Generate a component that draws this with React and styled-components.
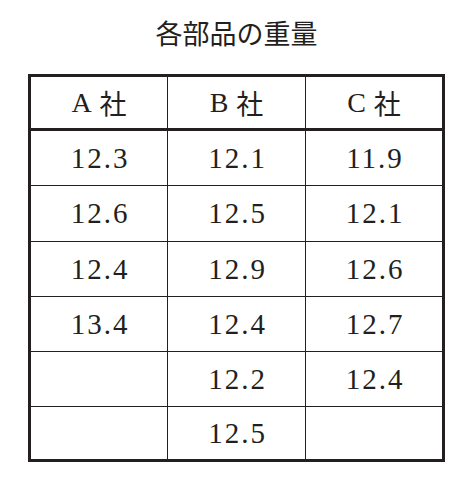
import React from "react";
import styled, { createGlobalStyle } from "styled-components";

const GlobalStyle = createGlobalStyle`
  html, body { margin: 0; padding: 0; background: #ffffff; }
  body { font-family: "Liberation Serif", "Noto Sans CJK JP", serif; color: #231f20; }
`;

const Page = styled.div`
  width: 475px;
  height: 484px;
  padding-left: 28px;
  box-sizing: border-box;
  display: flex;
  flex-direction: column;
  align-items: flex-start;
`;

const Title = styled.h1`
  margin: 0;
  padding-top: 19px;
  width: 417px;
  text-align: center;
  font-family: "Noto Sans CJK JP", sans-serif;
  font-weight: 400;
  font-size: 27px;
  line-height: 27px;
  color: #231f20;
`;

const Frame = styled.div`
  margin-top: 28px;
  width: 417px;
  box-sizing: border-box;
  border: 3px solid #231f20;
  display: flex;
  flex-direction: column;
`;

const Row = styled.div`
  display: grid;
  grid-template-columns: 136px 138px 137px;
  border-top: ${(p) => (p.$first ? "none" : "1px solid #231f20")};
  border-bottom: ${(p) => (p.$head ? "3px solid #231f20" : "none")};
`;

const Cell = styled.div`
  box-sizing: border-box;
  height: ${(p) => p.$h}px;
  border-left: ${(p) => (p.$lead ? "none" : "1px solid #231f20")};
  display: flex;
  align-items: center;
  justify-content: center;
  font-family: "Liberation Serif", "Noto Sans CJK JP", serif;
  font-size: 29px;
  letter-spacing: 2px;
  padding-left: 2px;
  color: #231f20;
`;

const HeadCell = styled(Cell)`
  font-size: 28px;
  letter-spacing: 0;
  padding-left: 0;
  gap: 8px;
`;

const Kanji = styled.span`
  font-family: "Noto Sans CJK JP", sans-serif;
  font-size: 27px;
  font-weight: 400;
`;

const companies = ["A", "B", "C"];

const rows = [
  { h: 54, v: ["12.3", "12.1", "11.9"] },
  { h: 55, v: ["12.6", "12.5", "12.1"] },
  { h: 54, v: ["12.4", "12.9", "12.6"] },
  { h: 54, v: ["13.4", "12.4", "12.7"] },
  { h: 54, v: ["", "12.2", "12.4"] },
  { h: 52, v: ["", "12.5", ""] },
];

export default function App() {
  return (
    <>
      <GlobalStyle />
      <Page>
        <Title>各部品の重量</Title>
        <Frame>
          <Row $first $head>
            {companies.map((c, i) => (
              <HeadCell key={c} $h={51} $lead={i === 0}>
                <span>{c}</span>
                <Kanji>社</Kanji>
              </HeadCell>
            ))}
          </Row>
          {rows.map((r, ri) => (
            <Row key={ri} $first={ri === 0}>
              {r.v.map((val, ci) => (
                <Cell key={ci} $h={r.h} $lead={ci === 0}>
                  {val}
                </Cell>
              ))}
            </Row>
          ))}
        </Frame>
      </Page>
    </>
  );
}
